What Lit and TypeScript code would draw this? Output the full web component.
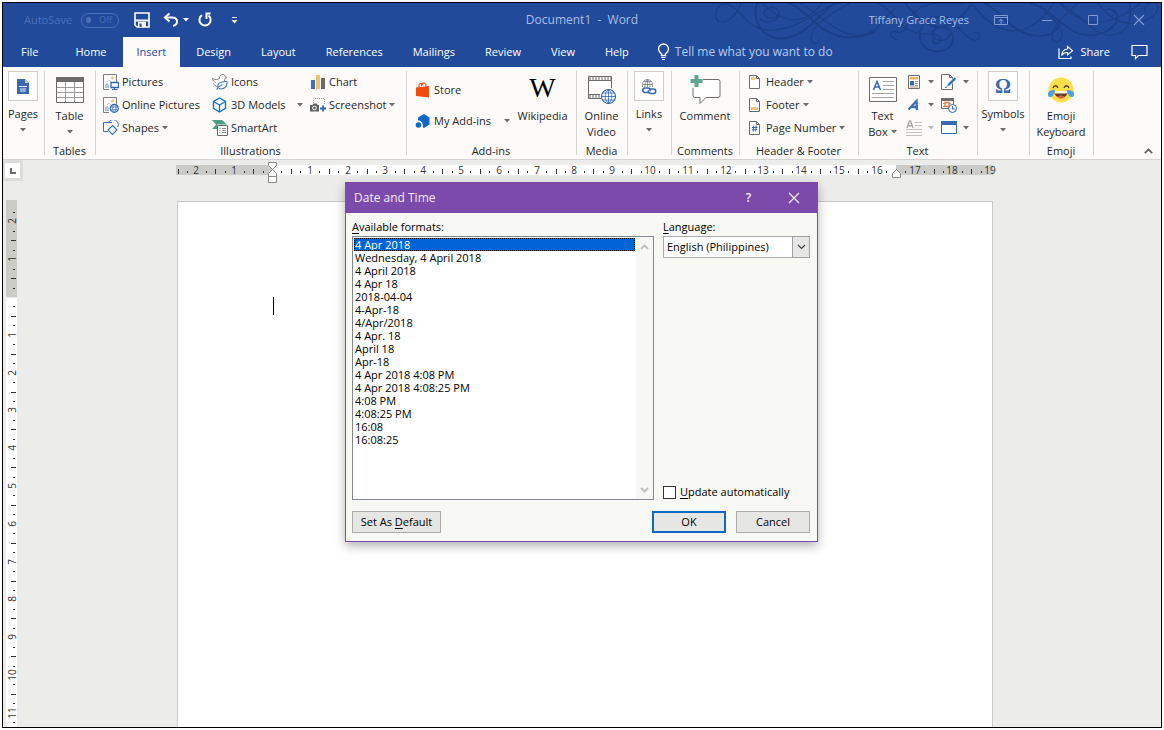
import { LitElement, html, svg, css, nothing, TemplateResult } from "lit";
import { customElement, property, state } from "lit/decorators.js";
import { classMap } from "lit/directives/class-map.js";

const icon = (w: number, h: number, body: unknown) =>
  html`<svg width=${w} height=${h} viewBox="0 0 ${w} ${h}" fill="none" aria-hidden="true">${body}</svg>`;

const caret = html`<svg width="6" height="4" viewBox="0 0 6 4" aria-hidden="true"><path d="M0 0h6L3 3.500z" fill="currentColor"/></svg>`;

/* ---------- title bar ---------- */
const saveIcon = icon(16, 16, svg`
  <path d="M1 1h14v14H3l-2-2z" stroke="#fff" stroke-width="1.6"/>
  <path d="M1.5 7.5h13v2h-13z" fill="#fff"/><path d="M4 10h8v5H4z" fill="#fff"/><path d="M5.5 11.5h2V15h-2z" fill="#214a9a"/>`);
const undoIcon = icon(16, 16, svg`
  <path d="M6.5 1.5L2 5.5l4.500 4" stroke="#fff" stroke-width="2"/>
  <path d="M2.500 5.500H9c3 0 5 1.600 5 4s-1.500 3.800-4 4.500" stroke="#fff" stroke-width="2"/>`);
const redoIcon = icon(16, 16, svg`
  <path d="M5 3.200A5.600 5.600 0 1 0 11.500 3.500" stroke="#fff" stroke-width="2"/>
  <path d="M8.500 1.500h5M9.500 1.500V7" stroke="#fff" stroke-width="2"/>`);
const customizeIcon = icon(7, 7, svg`<path d="M1 .5h5" stroke="#fff"/><path d="M.5 3h6l-3 3.500z" fill="#fff"/>`);
const displayOptions = icon(14, 12, svg`<path d="M.5 1.500h13v9H.5zM.5 3.500h13M7 10V5.500M4.800 7.500L7 5.300l2.200 2.200" stroke="currentColor"/>`);
const minIcon = icon(12, 12, svg`<path d="M1 6.500h10" stroke="currentColor"/>`);
const maxIcon = icon(12, 12, svg`<path d="M1.500 1.500h9v9h-9z" stroke="currentColor"/>`);
const closeIcon = icon(12, 12, svg`<path d="M1 1l10 10M11 1L1 11" stroke="currentColor" stroke-width="1.200"/>`);
const bulbIcon = icon(13, 18, svg`
  <path d="M4.500 12.500v-1.700C3 9.500 1.500 8.300 1.500 6a5 5 0 0 1 10 0c0 2.300-1.500 3.500-3 4.800v1.700z" stroke="#fff" stroke-width="1.300"/>
  <path d="M4.300 14.500h4.400M5 16.500h3" stroke="#fff"/>`);
const shareIcon = icon(16, 15, svg`
  <path d="M1 3.500v10h12v-2" stroke="#fff" stroke-width="1.200"/>
  <path d="M9.500 1.500l5 4.200-5 4.200V7.500C6.800 7.300 5 8.300 3.700 10.500 4 6.700 6 4.300 9.500 4z" stroke="#fff" stroke-width="1.100"/>`);
const chatIcon = icon(17, 16, svg`<path d="M1 1.500h15v10H7.500l-3 3v-3H1z" stroke="#fff" stroke-width="1.200"/>`);

const swirls = html`<svg class="swirls" width="461" height="63" viewBox="700 3 461 63" fill="none" stroke="#1b4089" aria-hidden="true">
  <g stroke-width="1.300">
    <path d="M741 3c-4 12-14 21-21 19-7-3-5-16 3-18 10-2 19 12 27 19 10 9 24 8 36 5 26-7 40-25 56-25"/>
    <path d="M757 3c-4 12 0 26 11 32 16 9 34-1 47-14 8-8 14-14 20-18" stroke-width="2"/>
    <path d="M778 15c-2 5-14 4-14-2 0-7 15-8 15 1 0 8-14 11-19 4"/>
    <path d="M762 3c14 14 32 22 46 13 7-5 12-9 14-13"/>
    <path d="M788 3c20 6 28 30 56 34 14 2 30-4 31-6" stroke-width="2"/>
    <path d="M850 3c-18 10-38 22-39 34-1 8 8 8 9 2M800 3c22 12 36 34 62 32 16-2 22-18 34-27"/>
    <path d="M905 3c12 14 20 23 33 24 15 0 26-12 34-24" stroke-width="2"/>
    <path d="M877 3c14 4 18 20 34 28 12 6 28 0 30 8 0 8-12 4-7-1"/>
    <path d="M898 40c-9-2-9-10-2-8 16 3 8-16 24-24 14-8 30-4 44-5"/>
    <path d="M950 33c0 10-17 10-17 1 0-10 20-9 20 4 0 18-32 18-33-1-1-16 16-24 30-18" stroke-width="1.800"/>
    <path d="M984 3c18 8 26 30 52 33 14 1 22-5 24-14" stroke-width="2"/>
    <path d="M972 3c16 22 34 34 56 25 12-6 20-16 26-25M953 24c10 4 14 18 24 16 6-4 0-10-4-7"/>
    <path d="M1078 3c-14 13-24 21-26 33 0 8 8 8 10 0 0-10-8-18-18-24"/>
    <path d="M1030 3c22 6 30 24 50 31 18 4 32-4 36-12 4-9-4-15-10-12" stroke-width="1.800"/>
    <path d="M1060 3c18 10 28 24 40 30 16 6 30-2 30-18V3"/>
    <path d="M1098 3c10 14 22 22 38 20 16-2 24-12 21-18-4-6-13 0-12 6M1140 3c-14 13-38 24-56 17-14-5-20-12-24-17"/>
  </g>
</svg>`;

/* ---------- ribbon ---------- */
const pagesIcon = icon(12, 15, svg`<path d="M0 0h8l4 4v11H0z" fill="#3a68ae"/><path d="M8 0v4h4z" fill="#b9cbe8"/>
  <path d="M2 8l1-1 1 1 1-1 1 1 1-1 1 1 1-1 1 1M3 10h6M3 12h6" stroke="#fff" stroke-width=".9"/>`);
const tableIcon = icon(28, 26, svg`<path d="M.5.500h27v25H.5z" fill="#fff" stroke="#6b6b6b"/><path d="M0 0h28v5H0z" fill="#6b6b6b"/>
  <path d="M1 10.500h26M1 15.500h26M1 20.500h26M9.500 5v20M18.500 5v20" stroke="#9c9c9c"/>`);
const photo = svg`<path d="M.5 15.500V.5h13V8M.5 15.500H6" stroke="#7e7e7e"/><circle cx="9.500" cy="4" r="1.500" fill="#f0ca78"/>
  <path d="M2 14v-3l2-2 2 2v3z" fill="#a9c3e0"/><path d="M4 8l2-2 2 2" stroke="#b9cfe6"/>`;
const picturesIcon = icon(16, 16, svg`${photo}<path d="M8 8.500h7.500v5H8z" fill="#fff" stroke="#2f67b5" stroke-width="1.300"/><path d="M11.700 13.500v2M9 15.500h5.500" stroke="#2f67b5"/>`);
const onlinePicturesIcon = icon(16, 16, svg`${photo}<circle cx="11.300" cy="11.300" r="4" fill="#fff" stroke="#2f67b5" stroke-width="1.200"/>
  <path d="M7.500 10h7.600M7.500 12.800h7.600M11.300 7.300c-2.300 2.600-2.300 5.400 0 8 2.300-2.600 2.300-5.400 0-8z" stroke="#2f67b5" stroke-width=".8"/>`);
const shapesIcon = icon(16, 16, svg`<path d="M5.500 2.500A5 5 0 0 1 14.800 7" stroke="#3b6fb8"/><path d="M9 2.500H.5v9H5" stroke="#3b6fb8"/>
  <path d="M9.500 5.500l4.500 4.500-4.500 4.500L5 10z" fill="#fff" stroke="#3b6fb8" stroke-width="1.200"/>`);
const iconsIcon = icon(16, 16, svg`<path d="M.5 4.500c3 1.500 5 1.300 7-.2 0-2.500 1.500-3.800 3.200-3.800 1.800 0 2.500 1.300 2.500 2.200l1.800.8-1.800.8c0 1-.5 2.200-1.200 3M.5 4.500c.3 2 1.500 3.300 3 4M1.500 9.500c.8 1.500 2 2.500 3.500 3" stroke="#828282"/>
  <path d="M6 15c-1.500-5 2-8 9-7.500.5 5.500-3.500 8.500-8 7M4.500 15.500c1.500-2.500 3.500-4 6-5" stroke="#4a80b8" stroke-width="1.100"/>`);
const cubeIcon = icon(16, 16, svg`<path d="M7.500 1l6 3.300v7L7.500 15l-6-3.700v-7z" stroke="#1173c7" stroke-width="1.400"/><path d="M1.500 4.500l6 3.500 6-3.500M7.500 8v7" stroke="#1173c7" stroke-width="1.300"/>`);
const smartArtIcon = icon(16, 16, svg`<path d="M0 0h10l5 4.500H5V9H0l4-4.500z" fill="#4f9d86"/><path d="M5.500 5.500h10v10h-10z" fill="#fff" stroke="#6b6b6b"/>
  <path d="M7.500 8.500h1M10 8.500h4M7.500 10.500h1M10 10.500h4M7.500 12.500h1M10 12.500h4" stroke="#8b8b8b"/>`);
const chartIcon = icon(16, 16, svg`<path d="M1 6h4v9H1z" fill="#3f72b8"/><path d="M6 1h4v14H6z" fill="#f0c46c"/><path d="M11 4h4v11h-4z" fill="#6b6b6b"/>`);
const screenshotIcon = icon(16, 16, svg`<path d="M3.500 6V1.500h11V8" stroke="#9a9a9a" stroke-dasharray="1 1"/>
  <path d="M0 8h2.500l1-1.500h3L7.500 8H9v6.500H0z" fill="#5f5f5f"/><circle cx="4.500" cy="11" r="1.900" fill="#5f5f5f" stroke="#fff"/><path d="M13 8.500v6M10 11.500h6" stroke="#2f67b5" stroke-width="1.800"/>`);
const storeIcon = icon(16, 16, svg`<path d="M1 5.500l13-1.500V15.500L1 14z" fill="#f04a0d"/><path d="M4 7V3.500C4 .8 7.500.8 8 3.500M6.500 4C6.500.5 11-.2 11 3.500V6" stroke="#f04a0d" stroke-width="1.100"/>`);
const addinsIcon = icon(16, 16, svg`<path d="M3 4.500L9 1l5.500 3.500v7L9 15l-1-.5C8 9.500 6.500 7.500 3 7.500z" fill="#1067c4"/><circle cx="3.500" cy="12" r="2.800" fill="#1067c4"/>`);
const videoIcon = icon(28, 28, svg`<path d="M23.500 12V.5H.5v22H13" fill="#fff" stroke="#6b6b6b"/><path d="M1 4.500h22M1 18.500h11" stroke="#6b6b6b"/>
  <path d="M1.500 2.500h22M1.500 20.500h11" stroke="#6b6b6b" stroke-width="3" stroke-dasharray="1 2"/>
  <circle cx="20.500" cy="20.500" r="7" fill="#fff" stroke="#2f67b5" stroke-width="1.100"/>
  <path d="M13.500 20.500h14M20.500 13.500v14M14.500 17h12M14.500 24h12M20.500 13.500c-4.500 4-4.500 10 0 14 4.500-4 4.500-10 0-14z" stroke="#2f67b5" stroke-width=".8"/>`);
const linksIcon = icon(16, 17, svg`<path d="M1.500 9V6.500a5 5 0 0 1 10 0V9M1.500 6.500h10M3 3.500h7M6.500 1.500V9M6.500 1.500C4.500 3.500 4 6 4 9M6.500 1.500C8.500 3.500 9 6 9 9" stroke="#7b7b7b" stroke-width=".8"/>
  <path d="M8.500 14.500H4a2.250 2.250 0 0 1 0-4.500h3a2.250 2.250 0 0 1 2 3.200" stroke="#2f67b5" stroke-width="1.500"/>
  <path d="M8 11h4.500a2.250 2.250 0 0 1 0 4.500h-3a2.250 2.250 0 0 1-2-3.200" stroke="#2f67b5" stroke-width="1.500"/>`);
const commentIcon = icon(31, 29, svg`<path d="M5 4.500h23q2 0 2 2v14q0 2-2 2H16l-6 6v-6H5q-2 0-2-2v-14q0-2 2-2z" fill="#fff" stroke="#6e6e6e"/>
  <path d="M0 0h13v13H0z" fill="#fdfbfa"/><path d="M6.500 0v12M.5 6h12" stroke="#5fa58f" stroke-width="4"/>`);
const docPage = svg`<path d="M.5.500h7l3 3v10H.5z" fill="#fff" stroke="#6b6b6b"/><path d="M7.500.5v3h3" stroke="#6b6b6b"/>`;
const headerIcon = icon(11, 14, svg`${docPage}<path d="M2 2h4.500v3H2z" fill="#f0c878"/>`);
const footerIcon = icon(11, 14, svg`${docPage}<path d="M2 9h7v3H2z" fill="#f0c878"/>`);
const pageNumberIcon = icon(11, 14, svg`${docPage}<path d="M4.700 4.500l-.6 6M7.200 4.500l-.6 6M3 6.500h5.500M2.800 8.700h5.500" stroke="#2f67b5"/>`);
const textBoxIcon = icon(28, 25, svg`<path d="M.5.500h27v24H.5z" fill="#fff" stroke="#6b6b6b"/><path d="M4.500 13L8 4.500 11.500 13M5.500 10h5" stroke="#3a68ae" stroke-width="1.500"/>
  <path d="M14 4.500h11M14 8.500h11M14 12.500h11M3 16.500h22M3 20.500h22" stroke="#a4a4a4"/>`);
const quickPartsIcon = icon(16, 16, svg`<path d="M2.500 1.500h11v13h-11z" fill="#fff" stroke="#6b6b6b"/><path d="M4 3h8v2.500H4z" fill="#e9b35e"/>
  <path d="M4 7h4v4.500H4z" fill="#3a68ae"/><path d="M9 7.500h3M9 9.500h3M9 11.500h3M4 13h8" stroke="#8b8b8b" stroke-width=".9"/>`);
const wordArtIcon = icon(16, 16, svg`<path d="M2.500 12.500L10.500 4l.5 9M5.500 10h5.500" stroke="#3a6fb5" stroke-width="2.300"/>`);
const dropCapIcon = icon(16, 16, svg`<path d="M1 8L3.500 1h1L7 8M2 5.800h4" stroke="#a8a8a8" stroke-width="1.400"/><path d="M9 2.500h7M9 5.500h7M0 9.500h16M0 12.500h16M0 15.500h16" stroke="#c0c0c0"/>`);
const signatureIcon = icon(16, 16, svg`<path d="M.5.500h8l3 3v12H.5z" fill="#fff" stroke="#6b6b6b"/><path d="M8.500.5v3h3" stroke="#6b6b6b"/><path d="M5 13l2-3.500 6.500-6.500 2 2L9 11.500z" fill="#2f67b5" stroke="#fff" stroke-width=".7"/><path d="M4 13.500l2-.5" stroke="#2f67b5"/>`);
const dateIcon = icon(16, 16, svg`<path d="M.5 1.500h12v10H.5z" fill="#fff" stroke="#6b6b6b"/><path d="M0 1h13v3H0z" fill="#6b6b6b"/><path d="M2 6.500h9M2 9.500h9" stroke="#999" stroke-dasharray="2 1"/>
  <path d="M4 5.500h4v4H4z" fill="#fff" stroke="#e07a2c" stroke-width="1.300"/><circle cx="11.500" cy="11.500" r="4" fill="#fff" stroke="#2f67b5"/><path d="M11.500 9v3H14" stroke="#2f67b5"/>`);
const objectIcon = icon(16, 16, svg`<path d="M.5 1.500h15v12H.5z" fill="#fff" stroke="#3a68ae"/><path d="M0 1h16v4H0z" fill="#3a68ae"/>`);
const emojiIcon = icon(28, 26, svg`<circle cx="14" cy="13" r="12.500" fill="#fbe04c"/><path d="M7 14h14c0 9-14 9-14 0z" fill="#6b3a22"/><path d="M7.500 14h13v2.500h-13z" fill="#fff"/>
  <path d="M10.500 20c2-2 5-2 7 0-2 2-5 2-7 0z" fill="#e05a4a"/><path d="M6 11c1-3 4-3 5 0M17 11c1-3 4-3 5 0" stroke="#5d3b1e" stroke-width="1.400"/>
  <path d="M1 17c0-3 3-4 7-4-1 4-2 7-4.500 7S1 18.500 1 17zM27 17c0-3-3-4-7-4 1 4 2 7 4.500 7S27 18.500 27 17z" fill="#4aa3df"/>`);
const collapseIcon = icon(9, 6, svg`<path d="M.8 5.200L4.500 1.500l3.700 3.700" stroke="#5f5f5f" stroke-width="1.700"/>`);

const UNIT = 37.8;

/* Ticks and numerals of a centimetre scale. The origin is the text margin. */
function scaleMarks(origin: number, first: number, last: number, vertical: boolean) {
  const marks: unknown[] = [];
  for (let q = Math.ceil(first * 4); q <= last * 4; q++) {
    if (q === 0) continue;
    const at = Math.round(origin + (q * UNIT) / 4);
    if (q % 4 === 0) {
      const label = Math.abs(q / 4);
      marks.push(vertical
        ? svg`<text transform="translate(10 ${at}) rotate(-90)" text-anchor="middle">${label}</text>`
        : svg`<text x=${at} y="9" text-anchor="middle">${label}</text>`);
    } else {
      const size = q % 2 === 0 ? 5 : 2;
      const from = q % 2 === 0 ? 3 : 5;
      marks.push(vertical
        ? svg`<rect x=${from + 2} y=${at} width=${size} height="1"/>`
        : svg`<rect x=${at} y=${from + 1} width="1" height=${size}/>`);
    }
  }
  return marks;
}

@customElement("ribbon-group")
class RibbonGroup extends LitElement {
  @property() label = "";
  static styles = css`
    :host { display: flex; flex-direction: column; flex: none; box-sizing: border-box; height: 92px; padding: 3px 2px 0 0;
      background: linear-gradient(#d6d4d2, #d6d4d2) right 4px / 1px 84px no-repeat; }
    .body { flex: 1; min-height: 0; display: flex; }
    .label { height: 16px; line-height: 16px; text-align: center; }
  `;
  render() {
    return html`<div class="body"><slot></slot></div><div class="label">${this.label}</div>`;
  }
}

const FORMATS = ["4 Apr 2018", "Wednesday, 4 April 2018", "4 April 2018", "4 Apr 18", "2018-04-04", "4-Apr-18", "4/Apr/2018",
  "4 Apr. 18", "April 18", "Apr-18", "4 Apr 2018 4:08 PM", "4 Apr 2018 4:08:25 PM", "4:08 PM", "4:08:25 PM", "16:08", "16:08:25"];

@customElement("date-time-dialog")
class DateTimeDialog extends LitElement {
  @state() selected = 0;
  static styles = css`
    :host { display: block; box-sizing: border-box; width: 473px; border: 1px solid #7b4aab; background: #f8f8f4; color: #000;
      font: 11px/18px "Open Sans", "Noto Sans", sans-serif; box-shadow: 0 4px 10px rgba(0, 0, 0, .3); }
    header { display: flex; align-items: center; height: 30px; padding: 0 1px 0 8px; background: #7b4aab; color: #f4ecfa; font-size: 12px; font-weight: 400; }
    h2 { flex: 1; margin: 0; font: inherit; }
    button, select { font: inherit; color: inherit; margin: 0; border-radius: 0; }
    header button { width: 45px; height: 30px; padding: 0; border: 0; background: none; display: grid; place-items: center; }
    .help { font-weight: 600; }
    .body { display: grid; grid-template-columns: minmax(0, 1fr) 147px; column-gap: 9px; padding: 5px 7px 8px 6px; }
    .caption { display: block; height: 18px; }
    .list { display: flex; box-sizing: border-box; height: 264px; border: 1px solid #828790; background: #fff; }
    ul { flex: 1; list-style: none; margin: 0; padding: 1px; }
    li { height: 13px; line-height: 13px; padding-left: 1px; outline-offset: -1px; cursor: default; }
    li.selected { background: #0064d8; color: #fff; outline: 1px dotted #000; }
    .scroll { display: flex; flex-direction: column; justify-content: space-between; align-items: center; width: 17px; padding: 7px 1px 6px 0; box-sizing: border-box; background: #f7f7f6; }
    .side { display: flex; flex-direction: column; }
    .combo { position: relative; height: 22px; }
    select { appearance: none; box-sizing: border-box; width: 100%; height: 22px; padding: 0 20px 0 3px; border: 1px solid #acacac; background: #fff; line-height: 20px; }
    .drop { position: absolute; right: 0; top: 0; width: 18px; height: 22px; box-sizing: border-box; border: 1px solid #a0a0a0; background: #e6e6e5; display: grid; place-items: center; pointer-events: none; }
    .check { display: flex; align-items: center; gap: 4px; height: 16px; margin-top: auto; }
    .check input { appearance: none; box-sizing: border-box; width: 13px; height: 13px; margin: 0; border: 1px solid #333; background: #fff; }
    .check input:checked { box-shadow: inset 0 0 0 3px #fff; background: #333; }
    footer { grid-column: 1 / -1; display: flex; gap: 10px; margin-top: 11px; }
    footer button { box-sizing: border-box; height: 22px; min-width: 74px; padding: 0 7px; border: 1px solid #adadad; background: #e6e6e5; line-height: 18px; }
    footer .wide { min-width: 89px; margin-right: auto; }
    footer .primary { border: 2px solid #0f68c2; }
    u { text-underline-offset: 2px; }
  `;
  render() {
    return html`
      <header>
        <h2>Date and Time</h2>
        <button class="help" aria-label="Help">?</button>
        <button aria-label="Close">${closeIcon}</button>
      </header>
      <div class="body">
        <div>
          <span class="caption" id="formats"><u>A</u>vailable formats:</span>
          <div class="list">
            <ul role="listbox" aria-labelledby="formats">
              ${FORMATS.map((f, i) => html`<li role="option" aria-selected=${i === this.selected}
                class=${classMap({ selected: i === this.selected })} @click=${() => (this.selected = i)}>${f}</li>`)}
            </ul>
            <div class="scroll">
              ${icon(9, 6, svg`<path d="M1 5l3.500-3.500L8 5" stroke="#bdbdbd" stroke-width="1.800"/>`)}
              ${icon(9, 6, svg`<path d="M1 1l3.500 3.500L8 1" stroke="#bdbdbd" stroke-width="1.800"/>`)}
            </div>
          </div>
        </div>
        <div class="side">
          <label class="caption" for="language"><u>L</u>anguage:</label>
          <div class="combo">
            <select id="language"><option>English (Philippines)</option><option>English (United States)</option></select>
            <span class="drop">${icon(9, 6, svg`<path d="M1 1l3.500 3.500L8 1" stroke="#444" stroke-width="1.200"/>`)}</span>
          </div>
          <label class="check"><input type="checkbox"><span><u>U</u>pdate automatically</span></label>
        </div>
        <footer>
          <button class="wide">Set As <u>D</u>efault</button>
          <button class="primary">OK</button>
          <button>Cancel</button>
        </footer>
      </div>`;
  }
}

@customElement("app-root")
class AppRoot extends LitElement {
  @state() tab = "Insert";
  static styles = css`
    :host { display: block; box-sizing: border-box; height: 100vh; padding: 2px; background: #fff; overflow: hidden;
      font: 11px/16px "Open Sans", "Noto Sans", sans-serif; color: #262626; }
    button { font: inherit; color: inherit; margin: 0; padding: 0; border: 0; background: none; }
    svg { display: block; flex: none; }
    .window { position: relative; box-sizing: border-box; height: 100%; border: 1px solid #000; display: flex; flex-direction: column; overflow: hidden; }
    .top { position: relative; background: #214a9a; color: #fff; }
    .swirls { position: absolute; right: 0; top: 0; }
    .title { position: relative; display: grid; grid-template-columns: 1fr auto 1fr; align-items: center; height: 34px; color: #a9bfe8; }
    .quick { display: flex; align-items: center; padding-left: 21px; }
    .autosave { color: #4b70b8; }
    .toggle { display: flex; align-items: center; gap: 8px; box-sizing: border-box; width: 38px; height: 15px; margin: 0 15px 0 9px; padding: 0 6px 0 4px; border: 1px solid #4b70b8; border-radius: 8px; color: #4b70b8; font-size: 9px; line-height: 12px; }
    .knob { width: 6px; height: 6px; border-radius: 50%; background: #4b70b8; }
    .quick .undo { margin-left: 13px; display: flex; align-items: center; gap: 4px; color: #fff; }
    .quick .redo { margin-left: 8px; }
    .quick .more { margin-left: 18px; }
    .name { font-size: 12px; white-space: pre; }
    .account { display: flex; justify-content: flex-end; align-items: center; gap: 2px; }
    .user { margin-right: 8px; }
    .account button { width: 44px; height: 32px; display: grid; place-items: center; color: #7f9bd2; }
    .tabs { position: relative; display: flex; height: 30px; align-items: stretch; gap: 2px; }
    .tab { padding: 0 14px; color: #fff; font-weight: 500; }
    .tab.file { padding: 0 18px; margin-right: 3px; }
    .tab.active { background: #fdfbfa; color: #214a9a; }
    .tell { display: flex; align-items: center; gap: 5px; margin-left: 12px; font-size: 12px; color: #b7caee; }
    .right { display: flex; align-items: center; gap: 21px; margin-left: auto; padding-right: 13px; }
    .right button { display: flex; align-items: center; gap: 6px; font-weight: 500; }
    .ribbon { display: flex; height: 92px; flex: none; background: #fdfbfa; border-bottom: 1px solid #d6d4d2; }
    .ribbon svg { color: #6b6b6b; }
    .w42 { width: 42px; } .w44 { width: 44px; } .w51 { width: 51px; } .w52 { width: 52px; } .w64 { width: 64px; }
    .w68 { width: 68px; } .w119 { width: 119px; } .w170 { width: 170px; } .w311 { width: 311px; }
    .big { display: flex; flex-direction: column; align-items: center; flex: 1; min-width: 0; padding-top: 1px; white-space: nowrap; }
    .big .pic { display: grid; place-items: center; height: 37px; }
    .big .line { display: flex; align-items: center; justify-content: center; gap: 3px; height: 16px; }
    .big .box { box-sizing: border-box; width: 30px; height: 30px; margin-bottom: 5px; border: 1px solid #cfcdcb; background: #fff; display: grid; place-items: center; }
    .glyph { font: 20px/26px "Liberation Serif", serif; font-weight: 700; color: #3a68ae; }
    .wiki { height: 37px; font: 28px/34px "Liberation Serif", serif; color: #000; }
    .items { display: grid; grid-auto-rows: 23px; align-content: start; }
    .items.three { flex: 1; grid-template-columns: 109px 98px 1fr; padding-left: 7px; }
    .items.addins { grid-auto-rows: 31px; padding: 4px 0 0 8px; width: 95px; box-sizing: content-box; }
    .items.heads { padding-left: 9px; }
    .items.text { grid-template-columns: 35px 32px; padding-right: 3px; }
    .item { display: flex; align-items: center; gap: 3px; white-space: nowrap; }
    .items.heads svg:first-child { margin-right: 3px; }
    .spread { padding-right: 7px; }
    .spread svg:last-child { margin-left: auto; }
    .items.addins .spread { padding-right: 0; }
    .muted svg { color: #b8b8b8; }
    .collapse { margin: auto 8px 5px auto; }
    .workspace { flex: 1; min-height: 0; display: grid; grid-template-columns: 17px minmax(0, 1fr) 11px; grid-template-rows: 21px 19px minmax(0, 1fr); background: #ececea; overflow: hidden; }
    .corner { box-sizing: border-box; width: 20px; height: 21px; border: solid #dcdcda; border-width: 3px 3px 3px 2px; background: #fff; display: grid; place-items: center; }
    .across { width: 816px; justify-self: center; grid-column: 2; padding-top: 5px; }
    .down { grid-row: 3; grid-column: 1; padding-left: 3px; overflow: hidden; }
    .workspace svg { overflow: visible; }
    text { font: 10px "Open Sans", "Noto Sans", sans-serif; fill: #333; }
    rect { fill: #333; }
    .shade { fill: #cbccc8; } .paper { fill: #fff; }
    .page { grid-row: 3; grid-column: 2; box-sizing: border-box; width: 816px; justify-self: center; padding: 95px; margin-top: 1px; border: 1px solid #cbccc8; border-bottom: 0; background: #fff; }
    .cursor { width: 1px; height: 18px; background: #000; }
    date-time-dialog { position: absolute; left: calc(50% - 237px); top: 179px; }
  `;

  item(pic: TemplateResult, text: string, drop = false, cls = "") {
    return html`<button class="item ${cls}">${pic}<span>${text}</span>${drop ? caret : nothing}</button>`;
  }

  small(pic: TemplateResult, name: string, drop = true, cls = "") {
    return html`<button class="item ${cls}" title=${name} aria-label=${name}>${pic}${drop ? html`<span></span>${caret}` : nothing}</button>`;
  }

  render() {
    const tabs = ["File", "Home", "Insert", "Design", "Layout", "References", "Mailings", "Review", "View", "Help"];
    return html`<div class="window">
      <div class="top">
        ${swirls}
        <div class="title">
          <div class="quick">
            <span class="autosave">AutoSave</span>
            <button class="toggle" role="switch" aria-checked="false" aria-label="AutoSave"><span class="knob"></span>Off</button>
            <button aria-label="Save">${saveIcon}</button>
            <button class="undo" aria-label="Undo">${undoIcon}${caret}</button>
            <button class="redo" aria-label="Redo">${redoIcon}</button>
            <button class="more" aria-label="Customize toolbar">${customizeIcon}</button>
          </div>
          <div class="name">Document1  -  Word</div>
          <div class="account">
            <span class="user">Tiffany Grace Reyes</span>
            <button aria-label="Ribbon display options">${displayOptions}</button>
            <button aria-label="Minimize">${minIcon}</button>
            <button aria-label="Maximize">${maxIcon}</button>
            <button aria-label="Close">${closeIcon}</button>
          </div>
        </div>
        <div class="tabs" role="tablist">
          ${tabs.map((t) => html`<button role="tab" aria-selected=${t === this.tab} @click=${() => (this.tab = t)}
            class=${classMap({ tab: true, file: t === "File", active: t === this.tab })}>${t}</button>`)}
          <button class="tell">${bulbIcon}<span>Tell me what you want to do</span></button>
          <div class="right">
            <button>${shareIcon}<span>Share</span></button>
            <button aria-label="Comments">${chatIcon}</button>
          </div>
        </div>
      </div>

      <div class="ribbon">
        <ribbon-group class="w42">
          <button class="big"><span class="box">${pagesIcon}</span><span class="line">Pages</span><span class="line">${caret}</span></button>
        </ribbon-group>
        <ribbon-group class="w51" label="Tables">
          <button class="big"><span class="pic">${tableIcon}</span><span class="line">Table</span><span class="line">${caret}</span></button>
        </ribbon-group>
        <ribbon-group class="w311" label="Illustrations">
          <div class="items three">
            ${this.item(picturesIcon, "Pictures")}${this.item(iconsIcon, "Icons")}${this.item(chartIcon, "Chart")}
            ${this.item(onlinePicturesIcon, "Online Pictures")}${this.item(cubeIcon, "3D Models", true, "spread")}${this.item(screenshotIcon, "Screenshot", true)}
            ${this.item(shapesIcon, "Shapes", true)}${this.item(smartArtIcon, "SmartArt")}
          </div>
        </ribbon-group>
        <ribbon-group class="w170" label="Add-ins">
          <div class="items addins">
            ${this.item(storeIcon, "Store")}${this.item(addinsIcon, "My Add-ins", true, "spread")}
          </div>
          <button class="big"><span class="wiki">W</span><span class="line">Wikipedia</span></button>
        </ribbon-group>
        <ribbon-group class="w51" label="Media">
          <button class="big"><span class="pic">${videoIcon}</span><span class="line">Online</span><span class="line">Video</span></button>
        </ribbon-group>
        <ribbon-group class="w44">
          <button class="big"><span class="box">${linksIcon}</span><span class="line">Links</span><span class="line">${caret}</span></button>
        </ribbon-group>
        <ribbon-group class="w68" label="Comments">
          <button class="big"><span class="pic">${commentIcon}</span><span class="line">Comment</span></button>
        </ribbon-group>
        <ribbon-group class="w119" label="Header &amp; Footer">
          <div class="items heads">
            ${this.item(headerIcon, "Header", true)}${this.item(footerIcon, "Footer", true)}${this.item(pageNumberIcon, "Page Number", true)}
          </div>
        </ribbon-group>
        <ribbon-group class="w119" label="Text">
          <button class="big"><span class="pic">${textBoxIcon}</span><span class="line">Text</span><span class="line">Box ${caret}</span></button>
          <div class="items text">
            ${this.small(quickPartsIcon, "Quick Parts")}${this.small(signatureIcon, "Signature Line")}
            ${this.small(wordArtIcon, "WordArt")}${this.small(dateIcon, "Date and Time", false)}
            ${this.small(dropCapIcon, "Drop Cap", true, "muted")}${this.small(objectIcon, "Object")}
          </div>
        </ribbon-group>
        <ribbon-group class="w52">
          <button class="big"><span class="box glyph">Ω</span><span class="line">Symbols</span><span class="line">${caret}</span></button>
        </ribbon-group>
        <ribbon-group class="w64" label="Emoji">
          <button class="big"><span class="pic">${emojiIcon}</span><span class="line">Emoji</span><span class="line">Keyboard</span></button>
        </ribbon-group>
        <button class="collapse" aria-label="Collapse the ribbon">${collapseIcon}</button>
      </div>

      <div class="workspace">
        <div class="corner">${icon(8, 8, svg`<path d="M2 1v5h5" stroke="#6b6b6b" stroke-width="2"/>`)}</div>
        <div class="across">
          <svg width="816" height="18" viewBox="0 0 816 18">
            <path class="shade" d="M-1 0h97v10H-1zM719 0h97v10h-97z"/><path class="paper" d="M95 0h624v10H95z"/>
            ${scaleMarks(95, -2.5, 19, false)}
            <g fill="#fff" stroke="#8a8a8a">
              <path d="M91.500-2.500h8v3l-4 4 4 4v3h-8v-3l4-4-4-4zM91.500 11.500h8v6h-8z"/>
              <path d="M715.500 12.500v-4l4-4 4 4v4z"/>
            </g>
          </svg>
        </div>
        <div class="down">
          <svg width="11" height="540" viewBox="0 0 11 540">
            <path class="shade" d="M0 0h11v97H0z"/><path class="paper" d="M0 98h11v442H0z"/>
            ${scaleMarks(97, -2.25, 11.4, true)}
          </svg>
        </div>
        <div class="page"><div class="cursor"></div></div>
      </div>
      <date-time-dialog></date-time-dialog>
    </div>`;
  }
}
